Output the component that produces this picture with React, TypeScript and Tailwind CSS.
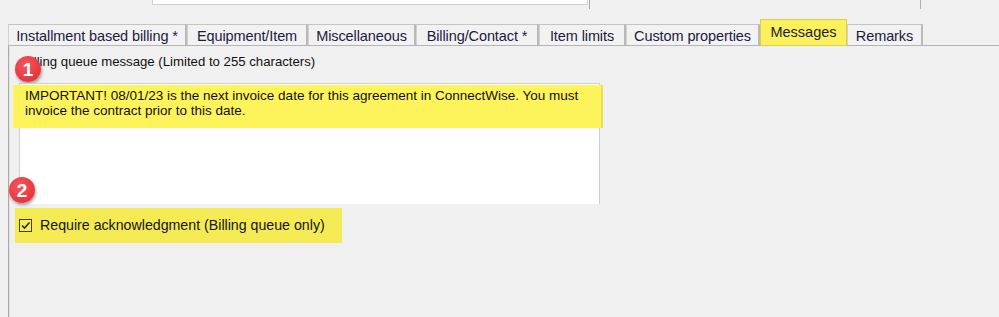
import React from "react";

const tabs: { label: string; w: string; active?: boolean }[] = [
  { label: "Installment based billing *", w: "w-[179px]" },
  { label: "Equipment/Item", w: "w-[121px]" },
  { label: "Miscellaneous", w: "w-[108px]" },
  { label: "Billing/Contact *", w: "w-[123px]" },
  { label: "Item limits", w: "w-[87px]" },
  { label: "Custom properties", w: "w-[134px]" },
  { label: "Messages", w: "w-[87px]", active: true },
  { label: "Remarks", w: "w-[76px]" },
];

function Badge({ n }: { n: string }) {
  return (
    <div className="w-[26px] h-[26px] rounded-full bg-[radial-gradient(circle_at_40%_35%,#f8555b,#dc2a33)] shadow-[1px_2px_3px_rgba(0,0,0,0.35)] flex items-center justify-center text-white text-[19px] font-bold leading-none [font-family:'Liberation_Sans',Arial,sans-serif]">
      {n}
    </div>
  );
}

export default function App() {
  return (
    <div className="w-[999px] h-[317px] bg-[#f0f0f0] overflow-hidden flex flex-col [font-family:'Liberation_Sans',Arial,sans-serif] text-[13px]">
      {/* top strip */}
      <div className="h-[19px] flex items-start shrink-0">
        <div className="w-[152px]" />
        <div className="w-[436px] h-[5px] bg-white border-b border-x border-[#cdd3da]" />
        <div className="w-px h-[9px] bg-[#a8a8a8] ml-px" />
        <div className="w-[330px]" />
        <div className="w-px h-[9px] bg-[#b0b0b0]" />
      </div>

      {/* tabs */}
      <div className="h-[27px] flex items-end pl-[8px] shrink-0">
        <div className="flex items-end flex-1 border-b border-[#b4b4b4] h-full">
          {tabs.map((t) =>
            t.active ? (
              <div
                key={t.label}
                className={`${t.w} h-[27px] bg-[#fbf15c] border border-[#d9d04a] flex items-center justify-center text-[#1d1d35] text-[14.5px] -mb-px pt-[1px] whitespace-nowrap`}
              >
                {t.label}
              </div>
            ) : (
              <div
                key={t.label}
                className={`${t.w} h-[21px] bg-[#f2f2f2] border-t border-l border-r-2 border-t-[#c4c4c4] border-l-[#d2d2d2] border-r-[#b9b9b9] flex items-center justify-center text-[#1b1b3f] text-[14.5px] whitespace-nowrap tracking-[-0.1px] pt-[3px]`}
              >
                {t.label}
              </div>
            )
          )}
          <div className="flex-1" />
        </div>
      </div>

      {/* panel */}
      <div className="flex-1 ml-[8px] border-l border-[#a9a9a9] relative">
        <div className="absolute left-0 top-0 bottom-0 w-px bg-[#e4e4e4]" />
        <div className="pl-[13px] pt-[6px] flex flex-col">
          <div className="relative h-[25px] text-[#111]">
            <span className="leading-[16px] text-[13.2px]">Billing queue message (Limited to 255 characters)</span>
            <div className="absolute left-[-7px] top-[4px]">
              <Badge n="1" />
            </div>
          </div>

          <div className="relative w-[581px] h-[121px] ml-[-3px] mt-[6px] bg-white border-t border-l border-r border-[#cfcfcf] border-b-[#e8e8e8]">
            <div className="absolute left-[-7px] top-[1px] w-[590px] h-[43px] bg-[#fdf35b] border-r-2 border-[#e9df4c]" />
            <div className="relative pl-[5px] pt-[4px] leading-[15px] text-[13.5px] text-[#111] whitespace-nowrap">
              IMPORTANT! 08/01/23 is the next invoice date for this agreement in ConnectWise. You must
              <br />
              invoice the contract prior to this date.
            </div>
            <div className="absolute left-[-11px] top-[93px]">
              <Badge n="2" />
            </div>
          </div>

          <div className="w-[327px] h-[35px] ml-[-7px] mt-[4px] bg-[#f4ea54] flex items-center pl-[4px] gap-[8px]">
            <div className="w-[13px] h-[13px] border border-[#3d3d20] bg-[#f8ee5c] flex items-center justify-center">
              <svg width="11" height="11" viewBox="0 0 11 11">
                <path d="M2 5.5 L4.5 8 L9.5 2.5" fill="none" stroke="#2b2b1a" strokeWidth="1.6" />
              </svg>
            </div>
            <span className="text-[#161616] text-[14.2px] whitespace-nowrap">Require acknowledgment (Billing queue only)</span>
          </div>
        </div>
      </div>
    </div>
  );
}
